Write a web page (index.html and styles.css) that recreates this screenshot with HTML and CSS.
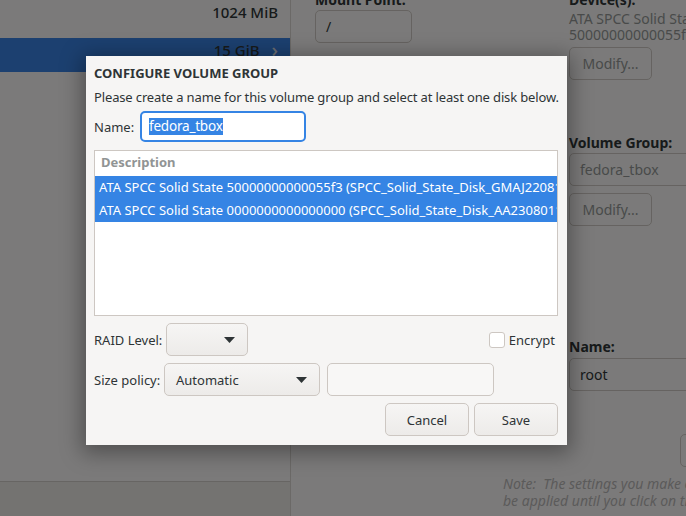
FILE: index.html
```html
<!DOCTYPE html>
<html>
<head>
  <meta charset="UTF-8">
  <title>Configure Volume Group</title>
  <link rel="stylesheet" href="styles.css">
</head>
<body>
  <div class="screen">
    <div class="sidebar">
      <div class="mount-row">1024 MiB</div>
      <div class="mount-row selected">15 GiB <span class="chev">›</span></div>
      <div class="sidebar-fill"></div>
      <div class="sidebar-foot"></div>
    </div>

    <div class="details">
      <div class="details-cols">
        <div class="col-a">
          <div class="field-label">Mount Point:</div>
          <div class="bg-entry mount-entry">/</div>
          <div class="field-label capacity-label">Desired Capacity:</div>
        </div>
        <div class="col-b">
          <div class="field-label">Device(s):</div>
          <div class="device-text">ATA SPCC Solid State<br>50000000000055f3</div>
          <div class="bg-button">Modify...</div>
          <div class="field-label vg-label">Volume Group:</div>
          <div class="bg-entry wide-entry insensitive">fedora_tbox</div>
          <div class="bg-button vg-modify">Modify...</div>
          <div class="field-label name-label">Name:</div>
          <div class="bg-entry wide-entry name-entry">root</div>
          <div class="bg-button edge-button"></div>
        </div>
      </div>
      <p class="note">Note:&nbsp; The settings you make on this screen will not<br>be applied until you click on the main menu's 'Begin</p>
    </div>

    <div class="dim"></div>

    <div class="dialog">
      <div class="dlg-title">CONFIGURE VOLUME GROUP</div>
      <div class="dlg-desc">Please create a name for this volume group and select at least one disk below.</div>

      <div class="dlg-row name-row">
        <span class="row-label name-lbl">Name:</span>
        <div class="entry focused"><span class="sel-text">fedora_tbox</span></div>
      </div>

      <div class="disk-list">
        <div class="list-head">Description</div>
        <div class="list-item selected-item">ATA SPCC Solid State 50000000000055f3 (SPCC_Solid_State_Disk_GMAJ220811223344)</div>
        <div class="list-item selected-item">ATA SPCC Solid State 0000000000000000 (SPCC_Solid_State_Disk_AA2308011223344)</div>
      </div>

      <div class="dlg-row">
        <span class="row-label raid-lbl">RAID Level:</span>
        <div class="combo raid-combo">
          <span class="combo-text"></span>
          <svg class="arrow" width="11" height="6" viewBox="0 0 11 6"><path d="M0 0 H11 L5.5 6 Z" fill="#2e3436"/></svg>
        </div>
        <label class="encrypt">
          <span class="check"></span>
          <span>Encrypt</span>
        </label>
      </div>

      <div class="dlg-row">
        <span class="row-label size-lbl">Size policy:</span>
        <div class="combo size-combo">
          <span class="combo-text">Automatic</span>
          <svg class="arrow" width="11" height="6" viewBox="0 0 11 6"><path d="M0 0 H11 L5.5 6 Z" fill="#2e3436"/></svg>
        </div>
        <div class="entry size-entry"></div>
      </div>

      <div class="dlg-buttons">
        <button class="btn">Cancel</button>
        <button class="btn">Save</button>
      </div>
    </div>
  </div>
</body>
</html>
```

FILE: styles.css
```css
body {
  margin: 0;
  font-family: "Noto Sans", sans-serif;
  color: #2e3436;
  overflow: hidden;
}
.screen {
  position: relative;
  width: 686px;
  height: 516px;
  display: flex;
  background: #f6f5f4;
  overflow: hidden;
}

/* background: partitioning screen */
.sidebar {
  width: 290px;
  flex-shrink: 0;
  display: flex;
  flex-direction: column;
  border-right: 1px solid #d6d2ce;
}
.mount-row {
  text-align: right;
  padding-right: 12px;
  font-size: 15px;
  font-weight: 500;
}
.mount-row:first-child {
  height: 38px;
  line-height: 24px;
}
.mount-row.selected {
  height: 34px;
  line-height: 24px;
  background: #3880e0;
}
.chev {
  display: inline-block;
  margin-left: 8px;
  color: #d8dde4;
  font-size: 20px;
  line-height: 20px;
  vertical-align: -1px;
}
.sidebar-fill {
  flex: 1;
}
.sidebar-foot {
  height: 34px;
  border-top: 1px solid #cfcbc7;
  background: #e8e6e3;
}
.details {
  flex: 1;
  padding-left: 24px;
}
.details-cols {
  display: flex;
  margin-top: -9px;
}
.col-a {
  width: 254px;
  flex-shrink: 0;
}
.col-b {
  flex: 1;
}
.field-label {
  font-size: 14px;
  font-weight: bold;
  line-height: 17px;
}
.bg-entry {
  box-sizing: border-box;
  height: 33px;
  border: 1px solid #cdc7c2;
  border-radius: 5px;
  font-size: 14px;
  line-height: 31px;
  padding-left: 10px;
}
.mount-entry {
  width: 97px;
  margin-top: 2px;
}
.capacity-label {
  margin-top: 10px;
}
.device-text {
  font-size: 14px;
  line-height: 16px;
  margin-top: 3px;
  white-space: nowrap;
  color: #929595;
}
.bg-button {
  box-sizing: border-box;
  width: 83px;
  height: 33px;
  margin-top: 4px;
  border: 1px solid #cdc7c2;
  border-radius: 5px;
  font-size: 14px;
  line-height: 31px;
  text-align: center;
  color: #929595;
}
.vg-label {
  margin-top: 54px;
}
.wide-entry {
  width: 140px;
  margin-top: 2px;
}
.insensitive {
  color: #929595;
}
.vg-modify {
  margin-top: 7px;
}
.name-label {
  margin-top: 112px;
}
.name-entry {
  margin-top: 3px;
}
.edge-button {
  margin-top: 43px;
  margin-left: 111px;
  width: 40px;
}
.note {
  margin: 8px 0 0 188px;
  font-size: 14px;
  font-style: italic;
  line-height: 17px;
  color: #b6b6b4;
  white-space: nowrap;
}
.dim {
  position: absolute;
  inset: 0;
  background: rgba(0,0,0,0.5);
}

/* dialog */
.dialog {
  position: absolute;
  left: 86px;
  top: 56px;
  width: 481px;
  height: 389px;
  box-sizing: border-box;
  padding: 8px 8px 0 8px;
  background: #f6f5f4;
  box-shadow: 0 4px 20px 4px rgba(0,0,0,0.35);
  font-size: 13px;
}
.dlg-title {
  font-weight: bold;
  line-height: 18px;
}
.dlg-desc {
  margin-top: 6px;
  line-height: 18px;
  white-space: nowrap;
  letter-spacing: -0.14px;
}
.dlg-row {
  display: flex;
  align-items: center;
  margin-top: 7px;
}
.name-row {
  margin-top: 5px;
}
.row-label {
  flex-shrink: 0;
}
.name-lbl { width: 46px; }
.raid-lbl { width: 72px; }
.size-lbl { width: 70px; }
.entry {
  box-sizing: border-box;
  height: 33px;
  border: 1px solid #cdc7c2;
  border-radius: 5px;
  background: #fff;
}
.entry.focused {
  width: 166px;
  height: 31px;
  border: 2px solid #3584e4;
  padding: 4px 0 0 7px;
}
.sel-text {
  display: inline-block;
  background: #3584e4;
  color: #fff;
  line-height: 17px;
  font-size: 13.5px;
  letter-spacing: -0.2px;
}
.disk-list {
  box-sizing: border-box;
  height: 166px;
  margin: 8px 1px 0 0;
  border: 1px solid #cdc7c2;
  background: #fff;
  overflow: hidden;
}
.list-head {
  height: 25px;
  line-height: 23px;
  padding-left: 6px;
  font-weight: bold;
  color: #919494;
}
.list-item {
  height: 23px;
  line-height: 23px;
  padding-left: 4px;
  white-space: nowrap;
}
.selected-item {
  background: #3584e4;
  color: #fff;
}
.combo {
  box-sizing: border-box;
  height: 33px;
  display: flex;
  align-items: center;
  justify-content: space-between;
  padding: 0 12px 0 11px;
  border: 1px solid #cdc7c2;
  border-radius: 5px;
  background: linear-gradient(#f6f5f4, #edebe9);
}
.raid-combo { width: 82px; }
.size-combo { width: 156px; }
.size-entry {
  width: 167px;
  margin-left: 7px;
  background: #f8f7f6;
}
.encrypt {
  display: flex;
  align-items: center;
  gap: 4px;
  margin-left: auto;
  margin-right: 4px;
}
.check {
  box-sizing: border-box;
  width: 16px;
  height: 16px;
  border: 1px solid #cdc7c2;
  border-radius: 3px;
  background: #fff;
}
.dlg-buttons {
  display: flex;
  justify-content: flex-end;
  gap: 5px;
  margin-top: 7px;
  margin-right: 1px;
}
.btn {
  width: 84px;
  height: 33px;
  border: 1px solid #cdc7c2;
  border-radius: 5px;
  background: linear-gradient(#f6f5f4, #edebe9);
  font-family: "Noto Sans", sans-serif;
  font-size: 13px;
  color: #2e3436;
}
```
